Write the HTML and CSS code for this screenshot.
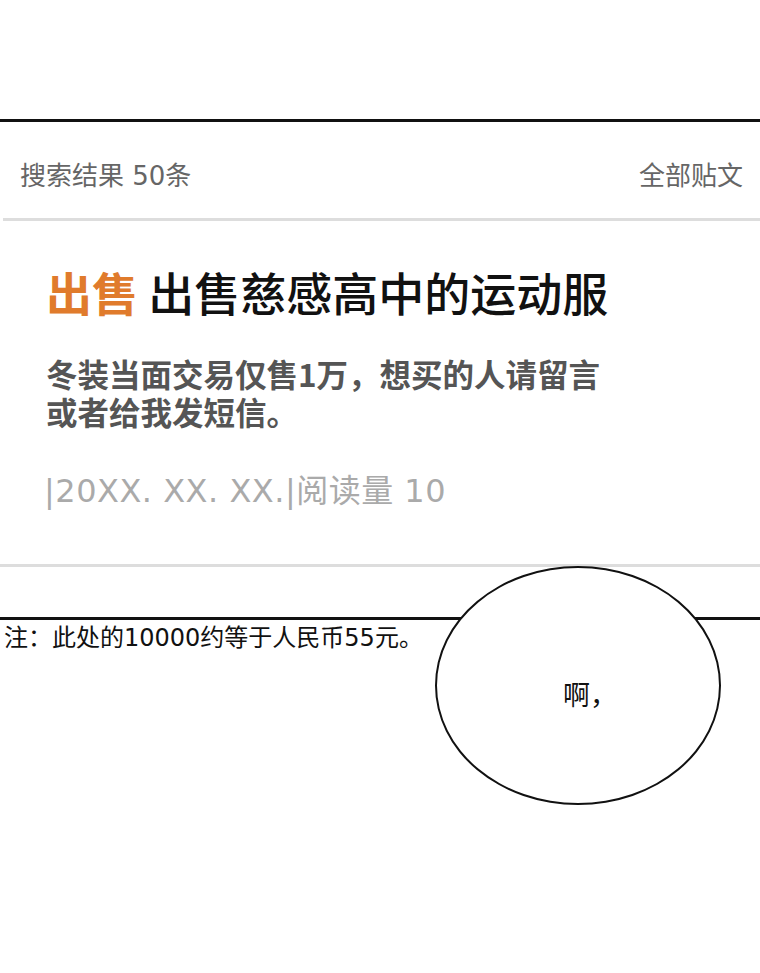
FILE: index.html
```
<!DOCTYPE html>
<html lang="zh">

<head>
    <meta charset="UTF-8">
    <meta name="viewport" content="width=device-width, initial-scale=1.0">
    <title>搜索结果</title>
    <link rel="stylesheet" href="styles.css">
</head>

<body>
    <div class="panel">
        <div class="top-rule"></div>
        <div class="search-head">
            <span>搜索结果 50条</span>
            <span>全部贴文</span>
        </div>
        <div class="divider"></div>
        <div class="post">
            <h1 class="post-title"><span class="tag">出售</span> 出售慈感高中的运动服</h1>
            <p class="post-body">冬装当面交易仅售1万，想买的人请留言<br>或者给我发短信。</p>
            <p class="post-meta">|20XX. XX. XX.|阅读量 10</p>
        </div>
        <div class="divider full"></div>
        <div class="bottom-rule"></div>
        <p class="note">注：此处的10000约等于人民币55元。</p>
        <div class="bubble"><span>啊，</span></div>
    </div>
</body>

</html>
```
FILE: styles.css
```
body {
    margin: 0;
    background-color: #fff;
    font-family: 'Noto Sans CJK SC', 'Noto Sans', sans-serif;
    color: #111;
}

.panel {
    position: relative;
    width: 760px;
    height: 973px;
    overflow: hidden;
}

.top-rule {
    margin-top: 119px;
    height: 3px;
    background-color: #111;
}

.search-head {
    display: flex;
    justify-content: space-between;
    align-items: center;
    height: 96px;
    padding: 6px 17px 0 20px;
    box-sizing: border-box;
    font-family: 'DejaVu Sans', 'Noto Sans CJK SC', sans-serif;
    font-size: 26px;
    color: #666;
}

.divider {
    height: 3px;
    margin-left: 3px;
    background-color: #ddd;
}

.divider.full {
    margin-left: 0;
}

.post {
    padding: 0 0 0 46px;
    height: 343px;
}

.post-title {
    margin: 0;
    padding-top: 42px;
    font-size: 46px;
    font-weight: 500;
    line-height: 56px;
    color: #111;
}

.tag {
    color: #e07b2c;
    font-weight: 700;
}

.post-body {
    margin: 35px 0 0;
    font-size: 31.5px;
    font-weight: 700;
    line-height: 38px;
    color: #555;
}

.post-meta {
    margin: 41px 0 0 -2px;
    font-family: 'DejaVu Sans', 'Noto Sans CJK SC', sans-serif;
    font-size: 32px;
    letter-spacing: 0.5px;
    line-height: 40px;
    color: #aaa;
}

.bottom-rule {
    margin-top: 50px;
    height: 3px;
    background-color: #111;
}

.note {
    margin: 2px 0 0 4px;
    font-family: 'DejaVu Sans', 'Noto Sans CJK SC', sans-serif;
    font-size: 24px;
    line-height: 32px;
    color: #111;
}

.bubble {
    position: absolute;
    left: 435px;
    top: 566px;
    width: 286px;
    height: 239px;
    border: 2.5px solid #111;
    border-radius: 50%;
    background-color: #fff;
    display: flex;
    align-items: center;
    justify-content: center;
    padding: 16px 0 0 24px;
    box-sizing: border-box;
    font-size: 27px;
}
```
